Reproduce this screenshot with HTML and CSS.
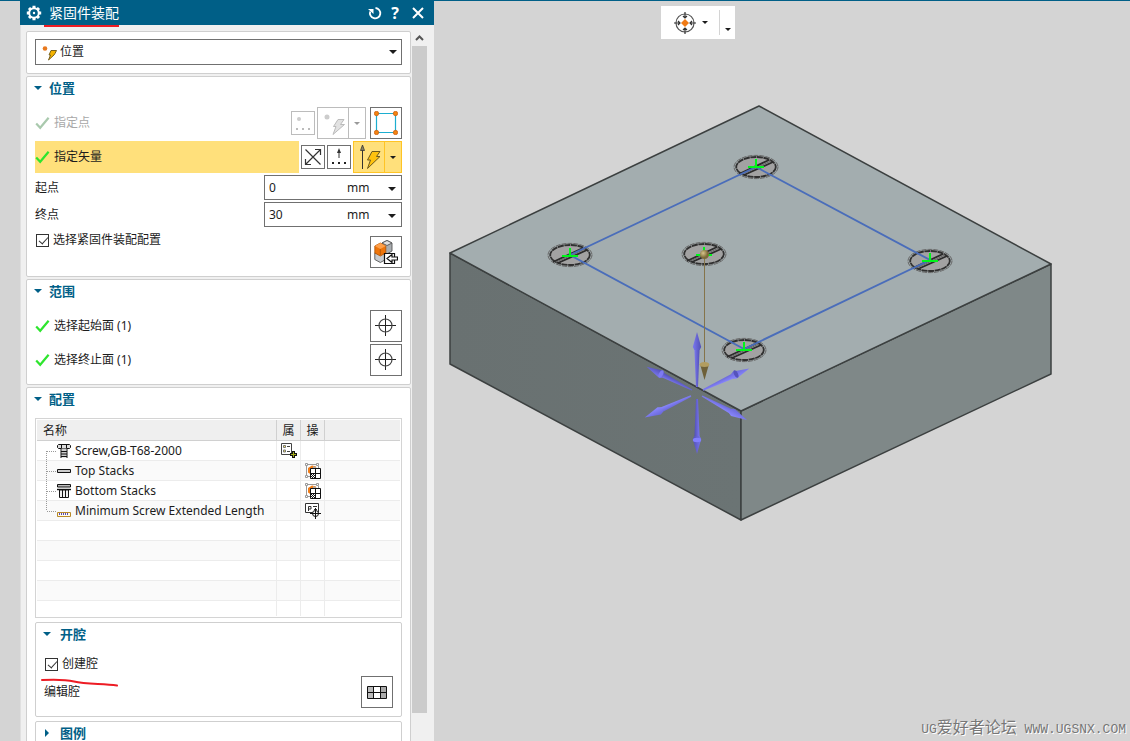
FILE: index.html
```html
<!DOCTYPE html>
<html lang="zh-CN">
<head>
<meta charset="utf-8">
<title>紧固件装配</title>
<link rel="stylesheet" href="styles.css">
</head>
<body>
<svg class="defs" aria-hidden="true">
  <defs>
    <symbol id="check" viewBox="0 0 15 14"><path d="M1.200 7.500l4 4.300L13.600 1.800" fill="none" stroke="currentColor" stroke-width="2.200"/></symbol>
    <symbol id="caret" viewBox="0 0 8 4"><path d="M0 0h8L4 4z" fill="currentColor"/></symbol>
    <symbol id="target" viewBox="0 0 22 22"><path d="M0 10.500h21M10.500 0v21" stroke="#222" fill="none"/><circle cx="10.500" cy="10.500" r="6.500" fill="none" stroke="#444" stroke-width="1.200"/></symbol>
    <symbol id="stack-edit" viewBox="0 0 16 16">
      <path d="M2 1.500h10M1.500 3v9M3 13.500h3M13.500 3v2" stroke="#999" fill="none"/>
      <path d="M3 5l4-2.500 4 1v3l-5 5-3-2z" fill="#ef7d1a"/><path d="M8 3l4 2v2H8z" fill="#aaa"/>
      <path d="M.5.5h2v2h-2zM11.500.5h2v2h-2zM.5 12.500h2v2h-2z" fill="#fff" stroke="#999"/>
      <path d="M5.500 5.500h10v10h-10z" fill="#fff" stroke="#111"/><path d="M10.500 5.500v10M5.500 10.500h10" stroke="#111"/>
      <path d="M6 11h1v1H6zM8 11h1v1H8zM7 12h1v1H7zM9 12h1v1H9zM6 13h1v1H6zM8 13h1v1H8zM7 14h1v1H7zM9 14h1v1H9z" fill="#111"/>
    </symbol>
  </defs>
</svg>
<main class="app">
  <section class="panel" aria-label="紧固件装配">
    <header class="titlebar">
      <svg class="gear" width="16" height="16" viewBox="0 0 16 16"><g transform="translate(8 8)" stroke="#fff" fill="none"><circle r="4.800" stroke-width="2"/><path d="M0-5V-7.200M0 5V7.200M-5 0H-7.200M5 0H7.200M-3.600-3.600l-1.400-1.400M3.600-3.600l1.400-1.400M-3.600 3.600l-1.400 1.400M3.600 3.600l1.400 1.400" stroke-width="3"/><circle r="1.200" fill="#fff" stroke="none"/></g></svg>
      <h1 class="title">紧固件装配</h1>
      <button class="title-btn" aria-label="重置"><svg width="14" height="14" viewBox="0 0 14 14"><path d="M7.500 2A5.200 5.200 0 1 1 2.200 5.500" fill="none" stroke="#fff" stroke-width="1.800"/><path d="M0 3h5.500v5z" fill="#fff"/></svg></button>
      <button class="title-btn help" aria-label="帮助">?</button>
      <button class="title-btn close" aria-label="关闭"><svg width="12" height="12" viewBox="0 0 12 12"><path d="M1 1l10 10M11 1L1 11" stroke="#fff" stroke-width="2"/></svg></button>
    </header>
    <div class="panel-body">
      <div class="cards">
        <section class="card picker">
          <div class="combo">
            <svg class="combo-icon" width="16" height="16" viewBox="0 0 16 16"><circle cx="3" cy="3.500" r="2.300" fill="#e8791e"/><path d="M9 5.500h5.500L13 8.500l-1 1.500-5.500 5 2-5H7z" fill="#f5b400" stroke="#6b5410" stroke-width=".9"/></svg>
            <select class="combo-select" aria-label="类型"><option>位置</option></select>
            <svg class="caret combo-caret"><use href="#caret"/></svg>
          </div>
        </section>

        <section class="card">
          <h2 class="heading"><button class="toggle"><svg class="caret"><use href="#caret"/></svg>位置</button></h2>
          <div class="rows">
            <div class="row">
              <div class="pick disabled"><svg class="check"><use href="#check"/></svg>指定点</div>
              <button class="tool small off" aria-label="点构造器" disabled><svg width="16" height="16" viewBox="0 0 16 16"><circle cx="4" cy="4" r="2" fill="#ccc"/><path d="M1 13h2v2H1zM7 13h2v2H7zM13 13h2v2h-2z" fill="#bbb"/></svg></button>
              <div class="split off">
                <button class="split-main" aria-label="自动判断点" disabled><svg width="24" height="24" viewBox="0 0 24 24"><circle cx="6" cy="6" r="2.500" fill="#ccc"/><path d="M17 8.500h6l-3.500 5h4L12 23.500l3-8H12.500z" fill="#e2e2e2" stroke="#bbb"/></svg></button>
                <button class="split-arrow" aria-label="更多点类型" disabled><svg class="caret tiny"><use href="#caret"/></svg></button>
              </div>
              <button class="tool spaced" aria-label="草图点"><svg width="24" height="24" viewBox="0 0 24 24"><path d="M2.500 2.500h19v19h-19z" fill="none" stroke="#1caed0" stroke-width="1.200"/><g fill="#f58410" stroke="#c4560a" stroke-width=".7"><circle cx="2.500" cy="2.500" r="2.200"/><circle cx="21.500" cy="2.500" r="2.200"/><circle cx="2.500" cy="21.500" r="2.200"/><circle cx="21.500" cy="21.500" r="2.200"/></g></svg></button>
            </div>
            <div class="row">
              <div class="pick active"><svg class="check"><use href="#check"/></svg>指定矢量</div>
              <button class="tool small" aria-label="反向"><svg width="18" height="18" viewBox="0 0 18 18"><path d="M1.500 1.500l15 15M1.500 16.500l15-15M11 1.500h5.500V7M1.500 11v5.500H7" fill="none" stroke="#333" stroke-width="1.200"/></svg></button>
              <button class="tool small" aria-label="矢量构造器"><svg width="18" height="18" viewBox="0 0 18 18"><path d="M9 4v6" stroke="#333"/><path d="M7 5L9 0l2 5z" fill="#333"/><path d="M2 14h2v2H2zM8 14h2v2H8zM14 14h2v2h-2z" fill="#222"/></svg></button>
              <div class="split on">
                <button class="split-main" aria-label="自动判断矢量"><svg width="24" height="26" viewBox="0 0 24 26"><path d="M5.500 5v20" stroke="#333"/><path d="M3.500 6.500L5.500 1l2 5.500z" fill="#8a8060" stroke="#333" stroke-width=".8"/><path d="M15 7.500h8l-3.500 5H23L10.500 24.500l3-8.500H10.500z" fill="#ffc20e" stroke="#6d5a1c"/></svg></button>
                <button class="split-arrow" aria-label="更多矢量类型"><svg class="caret tiny"><use href="#caret"/></svg></button>
              </div>
            </div>
            <div class="row field-row">
              <label class="field-label" for="start">起点</label>
              <div class="measure"><input id="start" class="num" value="0"><select class="unit" aria-label="起点单位"><option>mm</option></select><svg class="caret combo-caret"><use href="#caret"/></svg></div>
            </div>
            <div class="row field-row">
              <label class="field-label" for="end">终点</label>
              <div class="measure"><input id="end" class="num" value="30"><select class="unit" aria-label="终点单位"><option>mm</option></select><svg class="caret combo-caret"><use href="#caret"/></svg></div>
            </div>
            <div class="row config-row">
              <label class="tick"><input type="checkbox" class="box" checked>选择紧固件装配配置</label>
              <button class="tool" aria-label="选择配置"><svg width="24" height="24" viewBox="0 0 24 24"><g stroke="#555" stroke-width=".9"><path d="M8 3l5-2.500 5 2.500v8l-5 3-5-3z" fill="#a9adb0"/><path d="M8 3l5-2.500 5 2.500-5 2.500z" fill="#e0e0e0"/><path d="M.8 13h11v6.500l-5.500 3-5.500-3z" fill="#c8ccd0"/></g><path d="M.8 6l5.500-3 5.500 3v7l-5.500 3-5.500-3z" fill="#ee750a" stroke="#a85208" stroke-width=".8"/><path d="M.8 6l5.500-3 5.500 3-5.500 3z" fill="#ffa04a"/><path d="M6.300 9v6" stroke="#b95a08"/><path d="M10.500 13.500h10v10h-10z" fill="#fff" stroke="#111" stroke-width="1.200"/><path d="M23.500 17H18v-2.500L13 18.500l5 4V20h5.500z" fill="#fff" stroke="#111" stroke-width="1.200"/></svg></button>
            </div>
          </div>
        </section>

        <section class="card">
          <h2 class="heading"><button class="toggle"><svg class="caret"><use href="#caret"/></svg>范围</button></h2>
          <div class="rows">
            <div class="row"><div class="pick"><svg class="check"><use href="#check"/></svg>选择起始面 (1)</div><button class="tool" aria-label="选择起始面"><svg width="22" height="22"><use href="#target"/></svg></button></div>
            <div class="row"><div class="pick"><svg class="check"><use href="#check"/></svg>选择终止面 (1)</div><button class="tool" aria-label="选择终止面"><svg width="22" height="22"><use href="#target"/></svg></button></div>
          </div>
        </section>

        <section class="card">
          <h2 class="heading"><button class="toggle"><svg class="caret"><use href="#caret"/></svg>配置</button></h2>
          <div class="table-frame">
            <table class="tree">
              <colgroup><col><col class="col-s"><col class="col-s"><col class="col-r"></colgroup>
              <thead><tr><th>名称</th><th class="mid">属</th><th class="mid">操</th><th></th></tr></thead>
              <tbody>
                <tr><td><div class="node"><svg class="branch" width="10" height="20"><path d="M.5 10v10M1 10.500h9"/></svg><svg width="16" height="16" viewBox="0 0 16 16"><path d="M2.500 1.500h11l1 1v2l-1 1h-11l-1-1v-2z" fill="#ddd" stroke="#111"/><path d="M5.500 1v5M10.500 1v5" stroke="#111"/><path d="M5.500 5.500h5v9h-5z" fill="#ccc"/><path d="M5 6v9M11 6v9" stroke="#111"/><path d="M5 8.500h6M5 11h6M5 13.500h6" stroke="#111"/></svg>Screw,GB-T68-2000</div></td>
                  <td><svg class="cell-icon" width="17" height="16" viewBox="0 0 17 16"><path d="M.5.5h10v11H.5z" fill="#fff" stroke="#444"/><path d="M2.500 2.500h2v2h-2zM2.500 7h2v2h-2z" fill="#ffee60" stroke="#777"/><path d="M6 3.500h3M6 8.500h3" stroke="#444"/><path d="M12.500 8v7M9 11.500h7" stroke="#111" stroke-width="3"/><path d="M12.500 9v5M10 11.500h5" stroke="#a5ad18"/></svg></td><td></td><td></td></tr>
                <tr><td><div class="node"><svg class="branch" width="10" height="20"><path d="M.5 0v20M1 10.500h9"/></svg><svg width="16" height="16" viewBox="0 0 16 16"><path d="M1.500 6.500h13v3h-13z" fill="#ccc" stroke="#111"/></svg>Top Stacks</div></td><td></td><td><svg class="cell-icon" width="16" height="16"><use href="#stack-edit"/></svg></td><td></td></tr>
                <tr><td><div class="node"><svg class="branch" width="10" height="20"><path d="M.5 0v20M1 10.500h9"/></svg><svg width="16" height="16" viewBox="0 0 16 16"><path d="M1.500 1.500h13v2.500h-13z" fill="#bbb" stroke="#111"/><path d="M1 6.500h14" stroke="#111" stroke-width="1.400"/><path d="M3.500 7h9v7.500h-9z" fill="#eee" stroke="#111"/><path d="M6.500 7v7.500M9.500 7v7.500" stroke="#111"/></svg>Bottom Stacks</div></td><td></td><td><svg class="cell-icon" width="16" height="16"><use href="#stack-edit"/></svg></td><td></td></tr>
                <tr><td><div class="node"><svg class="branch" width="10" height="20"><path d="M.5 0v10M1 10.500h9"/></svg><svg width="16" height="16" viewBox="0 0 16 16"><path d="M1.500 9.500h13v4h-13z" fill="#fffbe8" stroke="#b98a28"/><path d="M3.500 10v2M5.500 10v2M7.500 10v2M9.500 10v2M11.500 10v2" stroke="#5548b8"/></svg>Minimum Screw Extended Length</div></td><td></td><td><svg class="cell-icon" width="16" height="16" viewBox="0 0 16 16"><path d="M.5.5h13v9H.5z" fill="#fff" stroke="#333"/><path d="M3.500 8V3.500h2.500V6H3.500M8 3.500h4M9 6.500h3" fill="none" stroke="#333"/><circle cx="10.500" cy="10.500" r="3" fill="#fff" stroke="#111"/><path d="M5 10.500h11M10.500 5v11" stroke="#111"/></svg></td><td></td></tr>
                <tr><td></td><td></td><td></td><td></td></tr>
                <tr><td></td><td></td><td></td><td></td></tr>
                <tr><td></td><td></td><td></td><td></td></tr>
                <tr><td></td><td></td><td></td><td></td></tr>
                <tr class="tail"><td></td><td></td><td></td><td></td></tr>
              </tbody>
            </table>
          </div>
          <section class="subcard">
            <h3 class="heading sub"><button class="toggle"><svg class="caret"><use href="#caret"/></svg>开腔</button></h3>
            <label class="tick create"><input type="checkbox" class="box" checked>创建腔
              <svg class="mark" width="78" height="9" viewBox="0 0 78 9"><path d="M1 2c14-.7 25-.2 32 1.500 12 3 28 2 43 4" fill="none" stroke="#ed1c24" stroke-width="2" stroke-linecap="round"/></svg>
            </label>
            <div class="row">
              <span class="field-label">编辑腔</span>
              <button class="tool" aria-label="编辑腔"><svg width="20" height="13" viewBox="0 0 20 13"><path d="M1 1h5v11H1z" fill="#bbb"/><path d="M14 1h5v11h-5z" fill="#aaa"/><path d="M.5.5h19v12H.5zM6.500 0v13M13.500 0v13M0 6.500h20" fill="none" stroke="#111"/></svg></button>
            </div>
          </section>
          <section class="subcard">
            <h3 class="heading sub"><button class="toggle"><svg class="caret shut"><use href="#caret"/></svg>图例</button></h3>
          </section>
        </section>
      </div>
      <div class="scroll">
        <svg class="scroll-up" width="9" height="6" viewBox="0 0 9 6"><path d="M1 5l3.500-3.500L8 5" fill="none" stroke="#555" stroke-width="2"/></svg>
        <div class="thumb"></div>
      </div>
    </div>
  </section>

  <section class="viewport" aria-label="模型视图">
    <svg class="scene" viewBox="434 1 696 740" preserveAspectRatio="xMidYMid meet">
      <defs>
        <linearGradient id="left-face" x1="0" y1="0" x2="1" y2="0"><stop offset="0" stop-color="#697171"/><stop offset="1" stop-color="#6b7474"/></linearGradient>
        <radialGradient id="ball" cx=".35" cy=".35"><stop offset="0" stop-color="#d8c48c"/><stop offset="1" stop-color="#7d6a38"/></radialGradient>
        <linearGradient id="arrow-fill" x1="0" y1="0" x2="1" y2="0"><stop offset="0" stop-color="#7a77f0"/><stop offset="1" stop-color="#5250b4"/></linearGradient>
        <linearGradient id="arrow-light" x1="0" y1="0" x2="1" y2="0"><stop offset="0" stop-color="#6a68d8"/><stop offset="1" stop-color="#8a88ff"/></linearGradient>
        <g id="screw">
          <ellipse rx="20" ry="10.500" fill="#a2a2a2"/>
          <ellipse rx="22" ry="11.600" fill="none" stroke="#666" stroke-width="1" stroke-dasharray="5 1"/>
          <ellipse rx="19.800" ry="10" fill="none" stroke="#303030" stroke-width="1.800" stroke-dasharray="6 .6"/>
          <path d="M-17 7L13-7M-12 8L17-5" stroke="#2c2c2c" stroke-width="1.900"/>
          <path d="M-14 7.200L15-6" stroke="#666" stroke-width="1"/>
        </g>
        <path id="cross" d="M0-8V1M-8 0H8" stroke="#00f51a" stroke-width="2" fill="none"/>
        <g id="arrow"><path d="M-1 0L-2.600-38h5.200L1 0z"/><path d="M-4.200-40L0-55 4.200-40 2.600-37h-5.200z"/></g>
        <g id="arrow-short"><path d="M-.7 0L-2.500-34h5L.7 0z"/><path d="M-4-35L0-51 4-35 2.500-32h-5z"/></g>
      </defs>
      <g stroke="#3c4040" stroke-width="1.500" stroke-linejoin="round">
        <path d="M450 253L741 411V520L450 364z" fill="url(#left-face)"/>
        <path d="M741 411L1051 264V374L741 520z" fill="#7f8888"/>
        <path d="M759 106L1051 264 741 411 450 253z" fill="#a3adaf"/>
      </g>
      <use href="#screw" x="756" y="167"/><use href="#screw" x="570" y="255"/><use href="#screw" x="704" y="254"/><use href="#screw" x="930" y="261"/><use href="#screw" x="744" y="350"/>
      <path d="M756 167L930 260 744 349 570 255z" fill="none" stroke="#4a6dba" stroke-width="1.900"/>
      <use href="#cross" x="756" y="167"/><use href="#cross" x="570" y="256"/><use href="#cross" x="704" y="255"/><use href="#cross" x="930" y="261"/><use href="#cross" x="744" y="350"/>
      <path d="M704.500 258V364" stroke="#85744a"/>
      <circle cx="704.500" cy="254.500" r="4.500" fill="url(#ball)"/>
      <path d="M700 364h9l-4.500 16z" fill="#6e6038"/><ellipse cx="704.500" cy="364.500" rx="4.800" ry="2.500" fill="#b29d60"/>
      <g fill="url(#arrow-fill)">
        <use href="#arrow" transform="translate(697 387)"/>
        <use href="#arrow" transform="translate(697 399) rotate(180)"/>
        <use href="#arrow-short" transform="translate(692 390) rotate(-63)"/>
      </g>
      <g fill="url(#arrow-light)">
        <use href="#arrow-short" transform="translate(703 390) rotate(65)"/>
        <use href="#arrow-short" transform="translate(691 396) rotate(-115)"/>
        <use href="#arrow-short" transform="translate(702 396) rotate(118)"/>
      </g>
      <ellipse cx="697" cy="440" rx="4.200" ry="2.200" fill="#827fff"/>
      <ellipse cx="736" cy="374" rx="2" ry="4" transform="rotate(-25 736 374)" fill="#5553bc"/>
      <ellipse cx="661" cy="374" rx="2" ry="4" transform="rotate(27 661 374)" fill="#7d7af2"/>
    </svg>
    <div class="float-bar">
      <button class="float-main" aria-label="捕捉视图"><svg width="24" height="24" viewBox="0 0 24 24"><circle cx="12" cy="12" r="9" fill="none" stroke="#555" stroke-width="1.200"/><path d="M12 1v6M12 17v6M1 12h6M17 12h6M10 5l2 2 2-2M10 19l2-2 2 2M5 10l2 2-2 2M19 10l-2 2 2 2" fill="none" stroke="#333" stroke-width="1.200"/><path d="M12 8l4 4-4 4-4-4z" fill="#f07a14"/></svg><svg class="caret tiny"><use href="#caret"/></svg></button>
      <button class="float-more" aria-label="更多"><svg class="caret tiny"><use href="#caret"/></svg></button>
    </div>
    <p class="watermark">UG<span class="watermark-cn">爱好者论坛</span> WWW.UGSNX.COM</p>
  </section>
</main>
</body>
</html>
```
FILE: styles.css
```css
* { box-sizing: border-box; }
body {
  margin: 0;
  background: #d4d4d4;
  color: #1c1c1c;
  font: 12px/16px "Noto Sans", "Noto Sans CJK SC", sans-serif;
}
h1, h2, h3, p { margin: 0; }
button, input, select { font: inherit; color: inherit; margin: 0; padding: 0; border: 0; border-radius: 0; background: none; }
svg { display: block; flex: none; }
.defs { position: absolute; width: 0; height: 0; }

.app { display: flex; height: 100vh; padding-left: 20px; border-top: 1px solid #005f87; overflow: hidden; }
.panel { flex: none; width: 414px; display: flex; flex-direction: column; background: #f0f0f0; }

.titlebar { flex: none; display: flex; align-items: center; height: 24px; padding: 0 10px 0 6px; background: #005f87; color: #fff; }
.title { position: relative; flex: 1; padding-left: 7px; font-size: 14px; line-height: 24px; font-weight: 400; }
.title::after { content: ""; position: absolute; left: 2px; top: 24px; width: 75px; height: 2px; background: #ed1c24; }
.title-btn { display: flex; justify-content: center; width: 20px; }
.help { font-size: 16px; font-weight: 700; }
.close { width: 19px; justify-content: flex-end; }

.panel-body { flex: 1; min-height: 0; display: flex; padding: 6px 7px 0 6px; border-left: 1px solid #e0e0e0; overflow: hidden; }
.cards { flex: 1; min-width: 0; display: flex; flex-direction: column; gap: 2px; }
.card { flex: none; border: 1px solid #cfcfcf; border-radius: 2px; background: #fff; padding: 0 8px 8px; }
.cards > .card { margin-left: -1px; }
.picker { padding: 7px 8px 8px; }

.combo { position: relative; }
.combo-icon { position: absolute; left: 7px; top: 6px; pointer-events: none; }
.combo-select { appearance: none; display: block; width: 100%; height: 26px; padding: 0 24px; border: 1px solid #707070; background: #fff; }
.caret { width: 8px; height: 4px; }
.tiny { width: 6px; height: 3px; }
.shut { transform: rotate(-90deg); }
.combo-caret { position: absolute; right: 5px; top: 11px; pointer-events: none; }

.heading { height: 30px; font-size: 13px; font-weight: 700; color: #005f87; }
.toggle { display: flex; align-items: center; gap: 7px; height: 21px; margin-left: -1px; }
.sub { height: 30px; }
.sub .toggle { gap: 9px; }

.rows { display: flex; flex-direction: column; gap: 2px; }
.row { display: flex; align-items: center; gap: 2px; }
.pick { flex: 1; display: flex; align-items: center; gap: 4px; height: 32px; }
.check { width: 15px; height: 14px; color: #2ee52e; }
.disabled { color: #a8a8a8; }
.disabled .check { color: #a9c9ad; }
.active { background: #ffe07b; }
.tool { flex: none; display: flex; align-items: center; justify-content: center; width: 32px; height: 32px; border: 1px solid #707070; background: #fff; }
.small { width: 24px; height: 24px; }
.spaced { margin-left: 2px; }
.off { border-color: #bcbcbc; color: #999; }
.split { display: flex; width: 49px; height: 32px; border: 1px solid #bcbcbc; }
.split-main { flex: 1; display: flex; align-items: center; justify-content: center; }
.split-arrow { width: 17px; display: flex; align-items: center; justify-content: center; border-left: 1px solid #bcbcbc; }
.split.on, .on .split-arrow { border-color: #ffc425; }
.on { background: #ffe07b; }

.field-label { flex: 1; }
.measure { position: relative; display: flex; width: 138px; height: 25px; border: 1px solid #707070; }
.num { width: 82px; padding-left: 4px; }
.unit { appearance: none; flex: 1; }
.config-row { align-items: flex-start; }
.config-row .tool { margin-top: 7px; }
.tick { flex: 1; display: flex; align-items: center; gap: 4px; height: 22px; padding-left: 1px; }
.box { appearance: none; position: relative; flex: none; width: 13px; height: 13px; border: 1px solid #333; background: #fff; }
.box:checked::after { content: ""; position: absolute; left: 4px; top: 0; width: 4px; height: 8px; border: solid #333; border-width: 0 1px 1px 0; transform: rotate(42deg); }

.table-frame { border: 1px solid #d4d4d4; padding: 1px; }
.tree { width: 100%; border-collapse: separate; border-spacing: 0; table-layout: fixed; }
.col-s { width: 24px; }
.col-r { width: 75px; }
.tree th { height: 21px; padding: 1px 6px 0; text-align: left; font-weight: 400; background: #efefef; border-bottom: 1px solid #d0d0d0; border-right: 1px solid #d0d0d0; }
.tree .mid { padding: 1px 0 0; text-align: center; }
.tree td { height: 20px; padding: 0; border-bottom: 1px solid #ececec; border-right: 1px solid #ececec; }
.tree tr > :last-child { border-right: 0; }
.tree tbody tr:nth-child(even) { background: #fafafa; }
.tree .tail td { height: 15px; border-bottom: 0; }
.node { display: flex; align-items: center; height: 19px; padding-left: 9px; gap: 3px; white-space: nowrap; }
.branch { margin-right: -3px; fill: none; stroke: #999; stroke-dasharray: 1 1; }
.cell-icon { margin: 0 auto 0 4px; }

.subcard { margin-top: 4px; padding: 0 8px 8px; border: 1px solid #cfcfcf; border-radius: 2px; }
.create { position: relative; margin-bottom: 1px; }
.mark { position: absolute; left: -3px; top: 25px; }

.scroll { flex: none; width: 15px; margin-left: 1px; display: flex; flex-direction: column; }
.scroll-up { flex: none; margin: 4px auto 5px; }
.thumb { height: 94%; background: #cbcbcb; }

.viewport { position: relative; flex: 1; min-width: 0; }
.scene { width: 100%; height: 100%; }
.float-bar { position: absolute; left: 227px; top: 5px; display: flex; height: 33px; background: #fff; }
.float-main { display: flex; align-items: center; gap: 5px; padding: 0 11px 0 12px; }
.float-more { width: 16px; margin: 4px 0; border-left: 1px solid #d4d4d4; display: flex; justify-content: center; align-items: flex-end; padding-bottom: 4px; }
.watermark { position: absolute; right: 4px; bottom: 2px; font: 13px/18px "Liberation Mono", "Noto Sans CJK SC", monospace; color: #777; text-shadow: 1px 1px 0 #fff; white-space: nowrap; }
.watermark-cn { font-size: 16px; }
```
